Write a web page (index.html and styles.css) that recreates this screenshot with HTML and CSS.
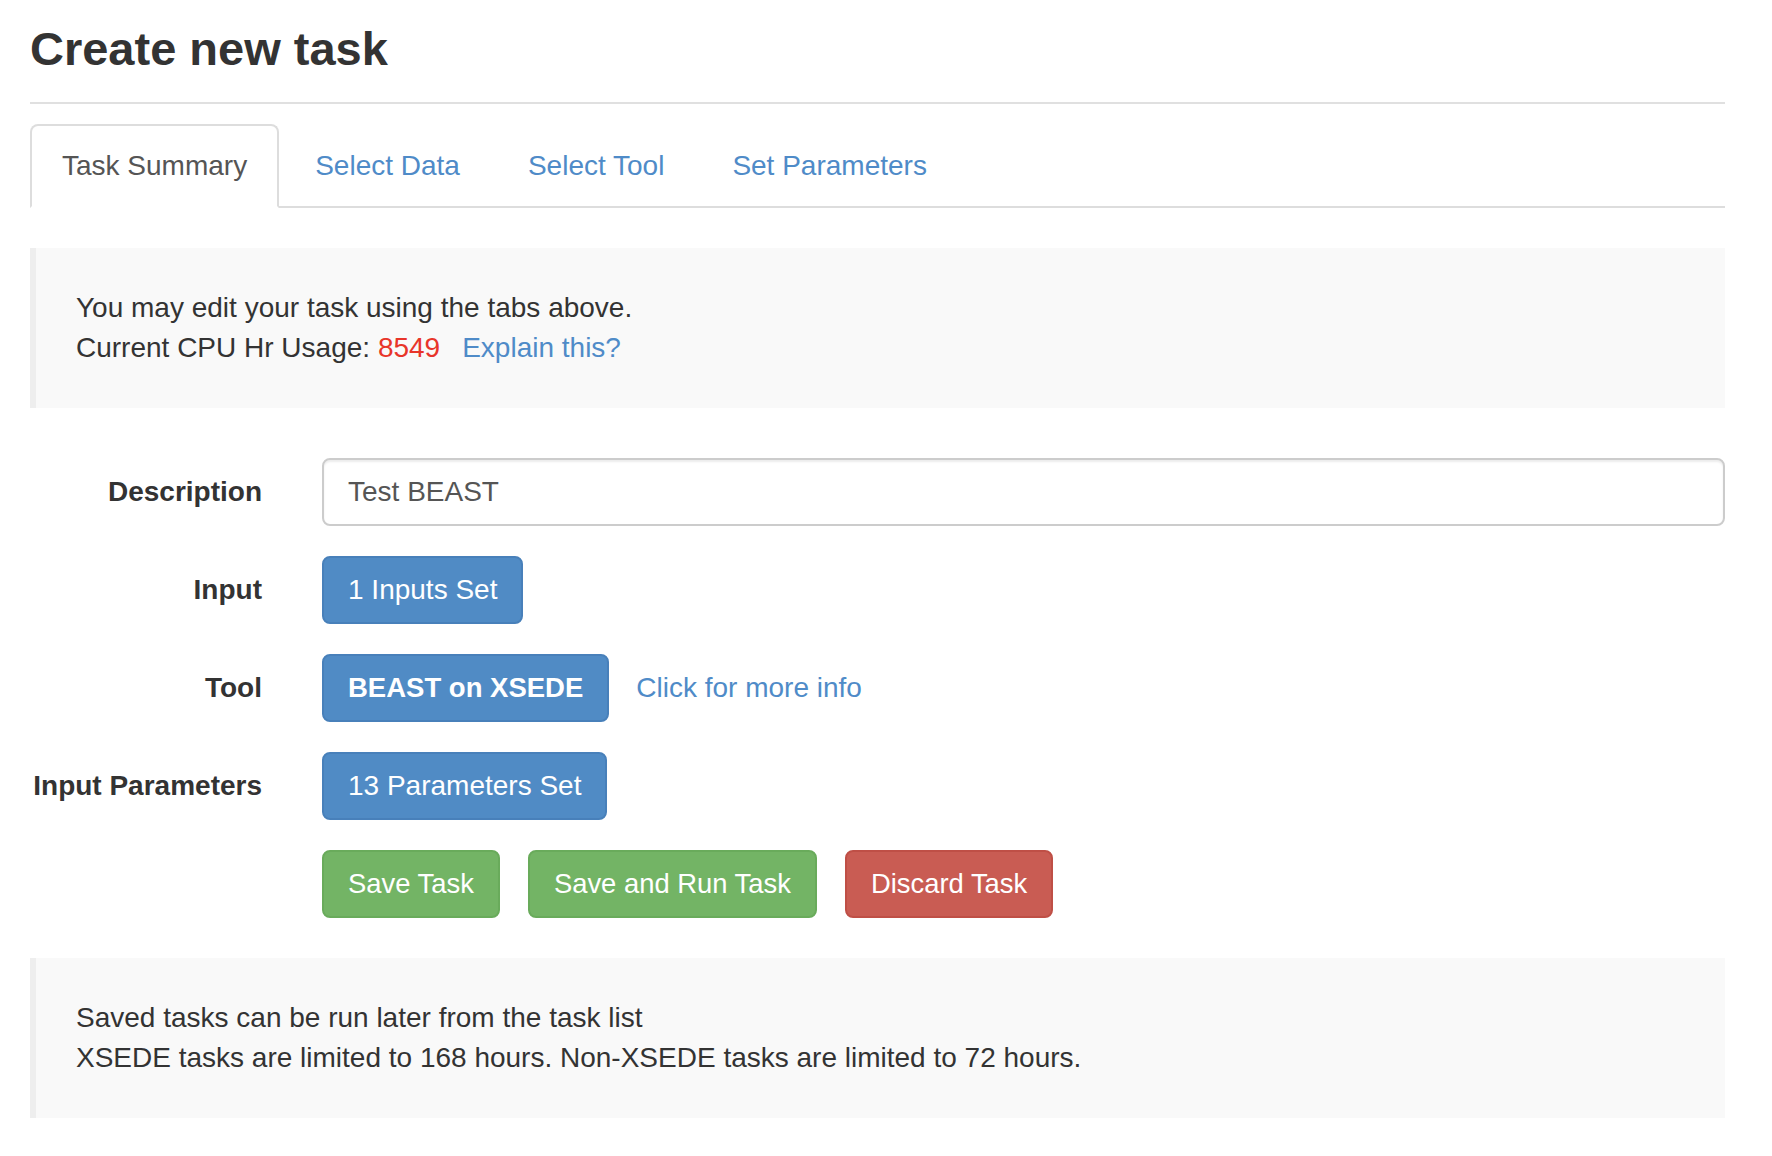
FILE: index.html
```html
<!DOCTYPE html>
<html lang="en">
<head>
<meta charset="utf-8">
<title>Create new task</title>
<link rel="stylesheet" href="styles.css">
</head>
<body>
<div class="page">
  <h1 class="title">Create new task</h1>
  <hr class="rule">
  <ul class="tabs">
    <li class="tab tab-active"><a>Task Summary</a></li>
    <li class="tab"><a href="#">Select Data</a></li>
    <li class="tab"><a href="#">Select Tool</a></li>
    <li class="tab"><a href="#">Set Parameters</a></li>
  </ul>

  <div class="well">
    <div>You may edit your task using the tabs above.</div>
    <div>Current CPU Hr Usage: <span class="usage">8549</span><a class="link explain" href="#">Explain this?</a></div>
  </div>

  <form class="form">
    <label class="label">Description</label>
    <div class="control"><input class="input" type="text" value="Test BEAST"></div>

    <label class="label">Input</label>
    <div class="control"><button type="button" class="btn btn-blue">1 Inputs Set</button></div>

    <label class="label">Tool</label>
    <div class="control"><button type="button" class="btn btn-blue btn-tool">BEAST on XSEDE</button><a class="link more" href="#">Click for more info</a></div>

    <label class="label">Input Parameters</label>
    <div class="control"><button type="button" class="btn btn-blue">13 Parameters Set</button></div>

    <div class="label"></div>
    <div class="control actions">
      <button type="button" class="btn btn-green btn-action">Save Task</button>
      <button type="button" class="btn btn-green btn-action">Save and Run Task</button>
      <button type="button" class="btn btn-red btn-action">Discard Task</button>
    </div>
  </form>

  <div class="well well-bottom">
    <div>Saved tasks can be run later from the task list</div>
    <div>XSEDE tasks are limited to 168 hours. Non-XSEDE tasks are limited to 72 hours.</div>
  </div>
</div>
</body>
</html>
```

FILE: styles.css
```css
html, body {
  margin: 0;
  padding: 0;
  background: #ffffff;
}

body {
  font-family: "Liberation Sans", Arial, Helvetica, sans-serif;
  font-size: 28px;
  line-height: 40px;
  color: #333333;
}

.page {
  width: 1695px;
  padding-left: 30px;
}

.title {
  margin: 22px 0 0 0;
  font-size: 47px;
  line-height: 53px;
  font-weight: 700;
  color: #333333;
}

.rule {
  margin: 27px 0 0 0;
  border: 0;
  border-top: 2px solid #e0e0e0;
  height: 0;
}

.tabs {
  list-style: none;
  margin: 20px 0 0 0;
  padding: 0;
  display: flex;
  border-bottom: 2px solid #dddddd;
}

.tab {
  margin-right: 4px;
  margin-bottom: -2px;
}

.tab a {
  display: block;
  padding: 20px 30px;
  border: 2px solid transparent;
  border-radius: 8px 8px 0 0;
  color: #4f8bc8;
  text-decoration: none;
  line-height: 40px;
}

.tab-active a {
  color: #555555;
  background: #ffffff;
  border-color: #dddddd;
  border-bottom-color: #ffffff;
}

.well {
  margin-top: 40px;
  background: #f9f9f9;
  border-left: 6px solid #eeeeee;
  padding: 40px 40px;
}

.usage {
  color: #e8352a;
}

.link {
  color: #4f8bc8;
  text-decoration: none;
}

.explain {
  margin-left: 22px;
}

.form {
  margin-top: 50px;
  display: grid;
  grid-template-columns: 232px 1403px;
  column-gap: 60px;
  row-gap: 30px;
}

.label {
  text-align: right;
  font-weight: 700;
  padding-top: 14px;
  line-height: 40px;
  height: 54px;
}

.control {
  display: flex;
  align-items: center;
}

.input {
  box-sizing: border-box;
  width: 100%;
  height: 68px;
  padding: 12px 24px;
  border: 2px solid #cccccc;
  border-radius: 8px;
  font-family: inherit;
  font-size: 28px;
  line-height: 40px;
  color: #555555;
  background: #ffffff;
  box-shadow: inset 0 2px 2px rgba(0, 0, 0, 0.075);
}

.btn {
  box-sizing: border-box;
  height: 68px;
  padding: 12px 24px;
  border: 2px solid transparent;
  border-radius: 8px;
  font-family: inherit;
  font-size: 28px;
  line-height: 40px;
  color: #ffffff;
  cursor: pointer;
  white-space: nowrap;
}

.btn-blue {
  background: #508bc5;
  border-color: #4880ba;
}

.btn-green {
  background: #73b465;
  border-color: #69ab5b;
}

.btn-red {
  background: #c95c53;
  border-color: #bf4f46;
}

.btn-tool {
  font-weight: 700;
  font-size: 27.5px;
}

.btn-action {
  font-size: 27.4px;
}

.more {
  margin-left: 27px;
}

.actions {
  gap: 28px;
}

.well-bottom {
  margin-top: 40px;
}
```
